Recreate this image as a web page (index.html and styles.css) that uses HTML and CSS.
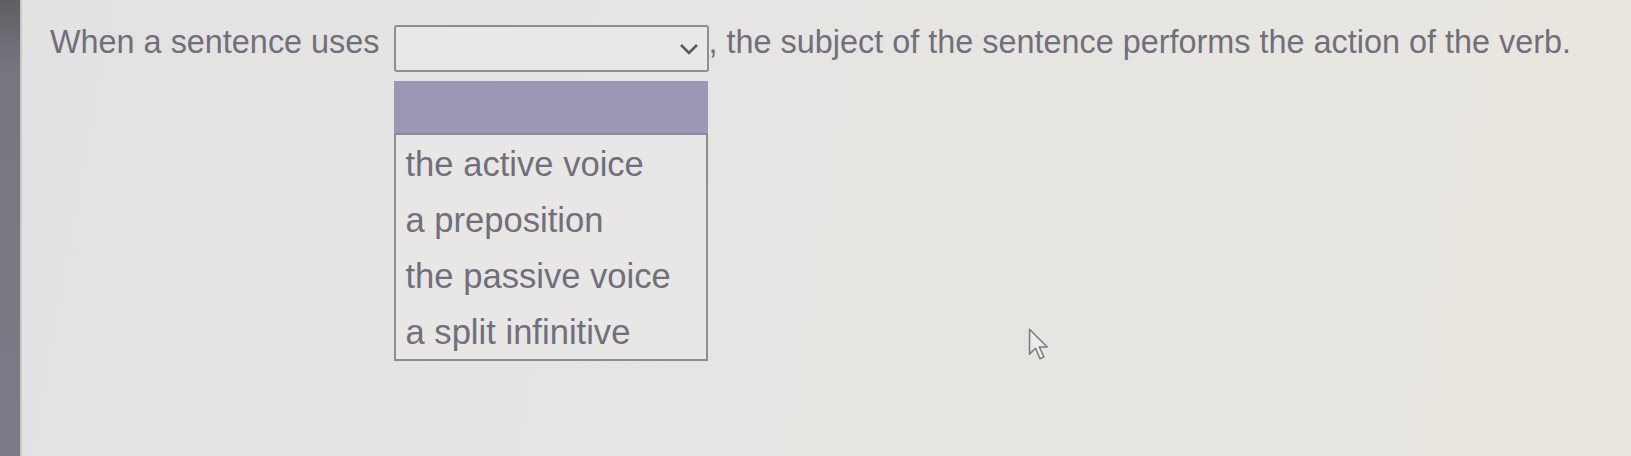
FILE: index.html
```html
<!DOCTYPE html>
<html>
<head>
    <link rel="stylesheet" href="styles.css">
</head>
<body>
    <div class="screen">
        <div class="edge"></div>
        <div class="page">
            <div class="sentence">
                <span class="words">When a sentence uses</span>
                <div class="dropdown">
                    <div class="select-box">
                        <svg class="chevron" width="20" height="12" viewBox="0 0 20 12">
                            <polyline points="2,2 10,10 18,2" fill="none" stroke="#5a5862" stroke-width="2.6"/>
                        </svg>
                    </div>
                    <ul class="options">
                        <li class="option option--blank"></li>
                        <li class="option">the active voice</li>
                        <li class="option">a preposition</li>
                        <li class="option">the passive voice</li>
                        <li class="option">a split infinitive</li>
                    </ul>
                </div>
                <span class="words">, the subject of the sentence performs the action of the verb.</span>
            </div>
        </div>
        <svg class="cursor" width="24" height="34" viewBox="0 0 18 26">
            <polygon points="1,1 1,20 5.5,15.5 9,23.5 12,22 8.5,14.5 14.5,14.5" fill="#ecebe9" stroke="#7d7b82" stroke-width="1.2" stroke-linejoin="round"/>
        </svg>
    </div>
</body>
</html>
```

FILE: styles.css
```css
body {
    margin: 0;
    font-family: "Liberation Sans", Arial, sans-serif;
    color: #716f7b;
}

.screen {
    position: relative;
    display: flex;
    width: 1631px;
    height: 456px;
    overflow: hidden;
    background: linear-gradient(100deg, #e3e2e2 0%, #e6e5e3 45%, #e9e6df 100%);
}

.edge {
    width: 20px;
    flex-shrink: 0;
    background: linear-gradient(180deg, #5f5e62 0%, #77757f 15%, #7c7a86 100%);
    border-right: 2px solid #cfc6c4;
}

.page {
    flex: 1;
    padding: 23px 0 0 28px;
}

.sentence {
    display: flex;
    align-items: flex-start;
    font-size: 32.4px;
    line-height: 38px;
}

.words {
    white-space: pre;
}

.dropdown {
    position: relative;
    margin: 2px 0 0 14px;
}

.select-box {
    box-sizing: border-box;
    width: 315px;
    height: 47px;
    border: 2px solid #8e8c94;
    border-radius: 3px;
    background: #e9e8e6;
    display: flex;
    align-items: center;
    justify-content: flex-end;
    padding-right: 8px;
}

.options {
    position: absolute;
    top: 56px;
    left: 0;
    box-sizing: border-box;
    width: 314px;
    margin: 0;
    padding: 0;
    list-style: none;
    border: 2px solid #8e8c94;
    border-top: none;
    background: #e8e7e5;
}

.option {
    height: 56px;
    padding-left: 10px;
    box-sizing: border-box;
    font-size: 34.6px;
    line-height: 58px;
    white-space: nowrap;
}

.option--blank {
    height: 54px;
    margin: 0 -2px;
    background: #9b98b5;
    border-bottom: 2px solid #8a879f;
}

.cursor {
    position: absolute;
    left: 1028px;
    top: 328px;
}
```
